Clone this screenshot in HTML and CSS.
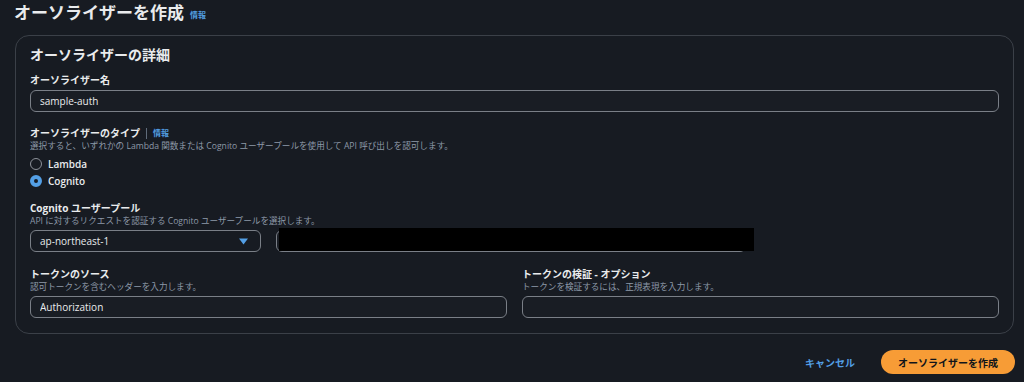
FILE: index.html
```html
<!DOCTYPE html>
<html lang="ja">

<head>
    <meta charset="UTF-8">
    <meta name="viewport" content="width=device-width, initial-scale=1.0">
    <title>オーソライザーを作成</title>
    <link rel="stylesheet" href="styles.css">
</head>

<body>
    <div class="page">
        <div class="page-header">
            <h1>オーソライザーを作成</h1>
            <a class="info-link" href="#">情報</a>
        </div>

        <div class="card">
            <h2>オーソライザーの詳細</h2>

            <div class="field field-first">
                <label class="field-label" for="name">オーソライザー名</label>
                <input class="text-input" type="text" id="name" value="sample-auth">
            </div>

            <div class="field">
                <div class="field-label">
                    オーソライザーのタイプ
                    <span class="divider"></span>
                    <a class="info-link" href="#">情報</a>
                </div>
                <div class="field-desc">選択すると、いずれかの Lambda 関数または Cognito ユーザープールを使用して API 呼び出しを認可します。</div>
                <div class="radio-group">
                    <label class="radio-row">
                        <span class="radio"></span>
                        Lambda
                    </label>
                    <label class="radio-row">
                        <span class="radio radio-checked"></span>
                        Cognito
                    </label>
                </div>
            </div>

            <div class="field field-pool">
                <div class="field-label">Cognito ユーザープール</div>
                <div class="field-desc">API に対するリクエストを認証する Cognito ユーザープールを選択します。</div>
                <div class="pool-row">
                    <div class="select">
                        <span>ap-northeast-1</span>
                        <svg class="caret" width="9" height="7" viewBox="0 0 9 7">
                            <path d="M0 0.5 H9 L4.5 6.5 Z" fill="#539fe5" />
                        </svg>
                    </div>
                    <div class="pool-input">
                        <input class="text-input" type="text">
                        <div class="redacted"></div>
                    </div>
                </div>
            </div>

            <div class="field field-token">
                <div class="token-col">
                    <div class="field-label">トークンのソース</div>
                    <div class="field-desc">認可トークンを含むヘッダーを入力します。</div>
                    <input class="text-input" type="text" value="Authorization">
                </div>
                <div class="token-col">
                    <div class="field-label">トークンの検証 - オプション</div>
                    <div class="field-desc">トークンを検証するには、正規表現を入力します。</div>
                    <input class="text-input" type="text">
                </div>
            </div>
        </div>

        <div class="actions">
            <button type="button" class="btn-link">キャンセル</button>
            <button type="button" class="btn-primary">オーソライザーを作成</button>
        </div>
    </div>
</body>

</html>
```

FILE: styles.css
```css
/* Dark console style form */
body {
    margin: 0;
    background-color: #171b22;
    color: #e9ebed;
    font-family: "Open Sans", "Noto Sans CJK JP", sans-serif;
}

.page {
    padding: 1px 10px 0 15px;
}

.page-header {
    display: flex;
    align-items: center;
    height: 24px;
    margin-left: -1px;
}

.page-header h1 {
    margin: 0;
    font-size: 17px;
    font-weight: 700;
    line-height: 24px;
}

.info-link {
    color: #539fe5;
    font-size: 8px;
    font-weight: 700;
    text-decoration: none;
    margin-left: 6px;
    margin-top: 3px;
}

.card {
    margin-top: 10px;
    border: 1px solid #3b4048;
    border-radius: 14px;
    padding: 9px 14px 15px 14px;
}

.card h2 {
    margin: 0;
    font-size: 14px;
    font-weight: 700;
    line-height: 20px;
}

.field {
    margin-top: 14px;
}

.field-first {
    margin-top: 8px;
}

.field-pool {
    margin-top: 12px;
}

.field-token {
    margin-top: 15px;
    display: flex;
    gap: 15px;
}

.token-col {
    flex: 1;
}

.field-label {
    display: flex;
    align-items: center;
    font-size: 10px;
    font-weight: 700;
    line-height: 14px;
    margin-bottom: 3px;
}

.field-label .info-link {
    margin: 0;
}

.divider {
    width: 1px;
    height: 11px;
    background-color: #5f6b7a;
    margin: 0 6px;
}

.field-desc {
    font-size: 8.6px;
    line-height: 12px;
    color: #8d99a8;
    margin-top: -3px;
    margin-bottom: 3px;
}

.text-input {
    display: block;
    box-sizing: border-box;
    width: 100%;
    height: 22px;
    padding: 0 9px;
    background-color: #191d24;
    border: 1.5px solid #7a7f87;
    border-radius: 6px;
    color: #e9ebed;
    font-family: inherit;
    font-size: 10px;
    outline: none;
}

.radio-group {
    margin-top: 1px;
}

.radio-row {
    display: flex;
    align-items: center;
    height: 17px;
    font-size: 10px;
    font-weight: 600;
    gap: 6px;
}

.radio {
    box-sizing: border-box;
    width: 12px;
    height: 12px;
    border: 1.5px solid #8c9199;
    border-radius: 50%;
}

.radio-checked {
    border: 4px solid #539fe5;
    background-color: #171b22;
}

.pool-row {
    display: flex;
    gap: 15px;
}

.select {
    box-sizing: border-box;
    width: 231px;
    height: 22px;
    display: flex;
    align-items: center;
    justify-content: space-between;
    padding: 0 12px 0 9px;
    border: 1.5px solid #7a7f87;
    border-radius: 6px;
    font-size: 10px;
}

.pool-input {
    position: relative;
    width: 470px;
}

.redacted {
    position: absolute;
    top: -2px;
    left: 3px;
    right: -8px;
    bottom: 1px;
    background-color: #000;
}

.actions {
    display: flex;
    justify-content: flex-end;
    align-items: center;
    margin-top: 16px;
    gap: 22px;
}

.btn-link {
    background: none;
    border: none;
    color: #539fe5;
    font-family: inherit;
    font-size: 10px;
    font-weight: 700;
    padding: 0 4px;
}

.btn-primary {
    height: 24px;
    margin-right: -1px;
    padding: 0 17px;
    background-color: #f79c36;
    color: #0f141a;
    border: none;
    border-radius: 12px;
    font-family: inherit;
    font-size: 10px;
    font-weight: 700;
    cursor: pointer;
}
```
